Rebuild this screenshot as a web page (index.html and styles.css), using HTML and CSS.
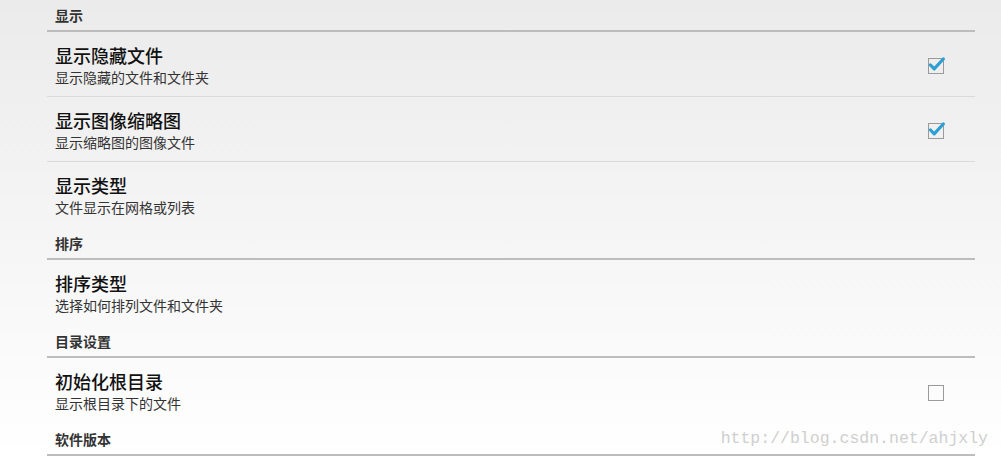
FILE: index.html
```html
<!DOCTYPE html>
<html lang="zh-CN">
<head>
<meta charset="UTF-8">
<meta name="viewport" content="width=device-width, initial-scale=1.0">
<title>设置</title>
<link rel="stylesheet" href="styles.css">
</head>
<body>
<div class="settings">
  <div class="section">显示</div>
  <div class="item">
    <div class="text">
      <div class="title">显示隐藏文件</div>
      <div class="summary">显示隐藏的文件和文件夹</div>
    </div>
    <span class="check on"><svg width="18" height="19" viewBox="0 0 18 19"><rect x="1.5" y="3.5" width="15" height="15" fill="none" stroke="#9a9a9a"/><path d="M3.5 10 L7.2 13.8 L16.3 4" fill="none" stroke="#2d9fd3" stroke-width="3.2" stroke-linecap="round" stroke-linejoin="round"/></svg></span>
  </div>
  <div class="item">
    <div class="text">
      <div class="title">显示图像缩略图</div>
      <div class="summary">显示缩略图的图像文件</div>
    </div>
    <span class="check on"><svg width="18" height="19" viewBox="0 0 18 19"><rect x="1.5" y="3.5" width="15" height="15" fill="none" stroke="#9a9a9a"/><path d="M3.5 10 L7.2 13.8 L16.3 4" fill="none" stroke="#2d9fd3" stroke-width="3.2" stroke-linecap="round" stroke-linejoin="round"/></svg></span>
  </div>
  <div class="item last">
    <div class="text">
      <div class="title">显示类型</div>
      <div class="summary">文件显示在网格或列表</div>
    </div>
  </div>
  <div class="section">排序</div>
  <div class="item last">
    <div class="text">
      <div class="title">排序类型</div>
      <div class="summary">选择如何排列文件和文件夹</div>
    </div>
  </div>
  <div class="section">目录设置</div>
  <div class="item last">
    <div class="text">
      <div class="title">初始化根目录</div>
      <div class="summary">显示根目录下的文件</div>
    </div>
    <span class="check"><svg width="18" height="19" viewBox="0 0 18 19"><rect x="1.5" y="3.5" width="15" height="15" fill="none" stroke="#9a9a9a"/></svg></span>
  </div>
  <div class="section">软件版本</div>
</div>
<div class="watermark">http://blog.csdn.net/ahjxly</div>
</body>
</html>
```
FILE: styles.css
```css
html, body { height: 100%; }
body { margin: 0; background: linear-gradient(to bottom, #ebebeb, #ffffff); font-family: "Noto Sans CJK SC", "Noto Sans", sans-serif; color: #111; position: relative; overflow: hidden; }
.settings { margin-left: 47px; width: 928px; }
.section { height: 30px; line-height: 30px; padding-left: 8px; font-size: 14px; font-weight: bold; color: #333; border-bottom: 2px solid #bdbdbd; }
.item { height: 65px; box-sizing: border-box; padding: 11px 30px 10px 8px; display: flex; align-items: center; justify-content: space-between; border-bottom: 1px solid #dadada; }
.item.last { border-bottom: none; height: 66px; }
.text { align-self: flex-start; }
.title { font-size: 18px; line-height: 24px; font-weight: 500; color: #111; }
.summary { font-size: 14px; line-height: 20px; color: #333; }
.check { display: block; width: 18px; height: 19px; }
.check svg { display: block; }
.watermark { position: absolute; right: 13px; top: 429px; font-family: "Liberation Mono", monospace; font-size: 16.5px; color: #cfcfcf; }
```
